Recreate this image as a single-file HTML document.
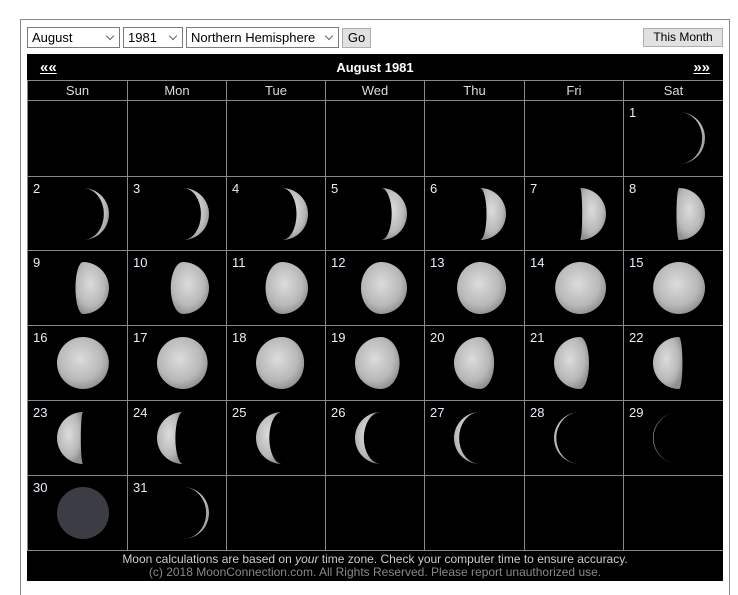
<!DOCTYPE html>
<html><head><style>
html,body{margin:0;background:#fff;font-family:"Liberation Sans",Arial,sans-serif;width:738px;height:595px;overflow:hidden;position:relative}
.box{position:absolute;left:20px;top:19px;width:708px;height:576px;border:1px solid #888;border-bottom:none;box-sizing:content-box}
.sel{position:absolute;top:27px;height:19px;border:1px solid #7a7a7a;background:#fff;font-size:13px;line-height:19px;padding-left:4px;box-sizing:content-box;color:#000}
.sel::after{content:"";position:absolute;right:6px;top:5px;width:5px;height:5px;border-right:1px solid #666;border-bottom:1px solid #666;transform:rotate(45deg)}
.btn{position:absolute;background:#e1e1e1;border:1px solid #adadad;font-size:12px;text-align:center;color:#000}
#cal{position:absolute;left:27px;top:54px;width:696px;height:527px;background:#000}
.title{position:absolute;left:0;top:0;width:696px;height:26px;color:#fff;font-weight:bold;font-size:13px;text-align:center;line-height:28px}
.nav{position:absolute;top:0;color:#fff;font-weight:bold;font-size:15px;text-decoration:underline;line-height:28px}
.dh{position:absolute;top:26px;height:20px;color:#ddd;font-size:13px;text-align:center;line-height:20px;border-left:1px solid #888;border-top:1px solid #888;box-sizing:border-box}
.cell{position:absolute;border-left:1px solid #888;border-top:1px solid #888;box-sizing:border-box}
.num{position:absolute;left:5px;top:4px;color:#e8eef8;font-size:13px;}
.cell svg{position:absolute;left:0;top:0}
.foot{position:absolute;left:0;top:496px;width:696px;height:31px;border-top:1px solid #888;text-align:center;font-size:12px;line-height:13px;padding-top:2px;box-sizing:border-box}
</style></head><body>
<div class="box"></div>
<div class="sel" style="left:27px;width:87px">August</div>
<div class="sel" style="left:123px;width:54px">1981</div>
<div class="sel" style="left:186px;width:147px">Northern Hemisphere</div>
<div class="btn" style="left:342px;top:28px;width:27px;height:18px;line-height:18px;font-size:13px">Go</div>
<div class="btn" style="left:643px;top:28px;width:78px;height:17px;line-height:17px">This Month</div>
<div id="cal">
<div class="title">August 1981</div>
<div class="nav" style="left:13px">««</div>
<div class="nav" style="right:13px">»»</div>
<div id="grid"></div>
<div class="foot"><span style="color:#ccc">Moon calculations are based on <i>your</i> time zone. Check your computer time to ensure accuracy.</span><br><span style="color:#888">(c) 2018 MoonConnection.com. All Rights Reserved. Please report unauthorized use.</span></div>
</div>
<script>
var xs=[0,100,199,298,397,497,596,696];
var ys=[46,122,196,271,346,421,496];
var days=["Sun","Mon","Tue","Wed","Thu","Fri","Sat"];
var h="";
for(var i=0;i<7;i++){h+='<div class="dh" style="left:'+xs[i]+'px;width:'+(xs[i+1]-xs[i])+'px">'+days[i]+'</div>';}
var kn=[[1,0.075],[7.5,0.25],[15.5,0.5],[22.6,0.75],[30,1.0],[31,1.075]];
function phase(d){for(var i=0;i<kn.length-1;i++){var a=kn[i],b=kn[i+1];if(d<=b[0]){return (a[1]+(b[1]-a[1])*(d-a[0])/(b[0]-a[0]))%1;}}return 0;}
function moon(d){
 var cx=55,cy=37,r=26;
 var p=phase(d);
 var defs='<defs><radialGradient id="g'+d+'" cx="45%" cy="42%" r="60%"><stop offset="0" stop-color="#dcdcdc"/><stop offset="0.7" stop-color="#b8b8b8"/><stop offset="1" stop-color="#909090"/></radialGradient></defs>';
 if(p<0.02||p>0.99) return defs+'<circle cx="'+cx+'" cy="'+cy+'" r="'+r+'" fill="#3c3c44"/>';
 var rx=Math.abs(r*Math.cos(2*Math.PI*p)).toFixed(2);
 var path;
 if(p<0.5){var s=p<0.25?0:1;path='M'+cx+','+(cy-r)+' A'+r+','+r+' 0 0 1 '+cx+','+(cy+r)+' A'+rx+','+r+' 0 0 '+s+' '+cx+','+(cy-r)+'Z';}
 else{var s=p>0.75?1:0;path='M'+cx+','+(cy-r)+' A'+r+','+r+' 0 0 0 '+cx+','+(cy+r)+' A'+rx+','+r+' 0 0 '+s+' '+cx+','+(cy-r)+'Z';}
 return defs+'<path d="'+path+'" fill="url(#g'+d+')"/>';
}
var start=6;
for(var k=0;k<42;k++){
 var c=k%7,rw=Math.floor(k/7);
 if(rw>5)break;
 var d=k-start+1;
 var w=xs[c+1]-xs[c],ht=ys[rw+1]-ys[rw];
 h+='<div class="cell" style="left:'+xs[c]+'px;top:'+ys[rw]+'px;width:'+w+'px;height:'+ht+'px">';
 if(d>=1&&d<=31){h+='<svg width="'+w+'" height="'+ht+'">'+moon(d)+'</svg><div class="num">'+d+'</div>';}
 h+='</div>';
}
document.getElementById('grid').innerHTML=h;
</script>
</body></html>
